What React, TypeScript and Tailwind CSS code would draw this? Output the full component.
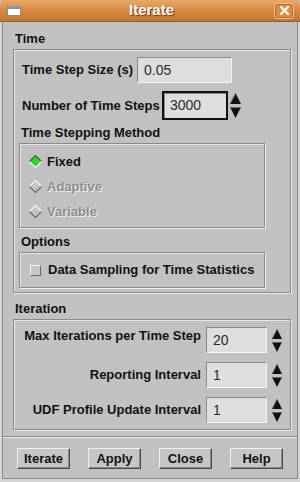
import React from "react";

const Spinner = ({ big }: { big?: boolean }) => (
  <div className={big ? "flex flex-col gap-[3px] w-[11px]" : "flex flex-col gap-[3px] w-[10px]"}>
    <svg width={big ? 11 : 10} height={big ? 11 : 10} viewBox="0 0 10 10">
      <polygon points="5,0 10,10 0,10" fill="#111" />
      <line x1="5" y1="0.5" x2="0.5" y2="9.5" stroke="#666" strokeWidth="0.8" />
    </svg>
    <svg width={big ? 11 : 10} height={big ? 11 : 10} viewBox="0 0 10 10">
      <polygon points="0,0 10,0 5,10" fill="#111" />
      <line x1="0.5" y1="0.5" x2="9.5" y2="0.5" stroke="#777" strokeWidth="0.8" />
    </svg>
  </div>
);

const Field = ({ value, w }: { value: string; w: string }) => (
  <div
    className={`${w} h-[26px] bg-[#dedede] border border-t-[#8a8a8a] border-l-[#8a8a8a] border-b-[#f4f4f4] border-r-[#f4f4f4] flex items-center pl-[6px] text-[14px] text-[#2a2a2a] font-normal`}
  >
    {value}
  </div>
);

const Diamond = ({ on }: { on?: boolean }) => (
  <svg width="13" height="13" viewBox="0 0 13 13">
    <polygon points="6.5,0.5 12.5,6.5 6.5,12.5 0.5,6.5" fill={on ? "#22dd22" : "#c4c4c4"} />
    {on ? (
      <>
        <polyline points="0.5,6.5 6.5,0.5 12.5,6.5" fill="none" stroke="#555" strokeWidth="1.2" />
        <polyline points="0.5,6.5 6.5,12.5 12.5,6.5" fill="none" stroke="#f2f2f2" strokeWidth="1.2" />
      </>
    ) : (
      <>
        <polyline points="0.5,6.5 6.5,0.5 12.5,6.5" fill="none" stroke="#f4f4f4" strokeWidth="1.2" />
        <polyline points="0.5,6.5 6.5,12.5 12.5,6.5" fill="none" stroke="#6a6a6a" strokeWidth="1.2" />
      </>
    )}
  </svg>
);

const Btn = ({ label }: { label: string }) => (
  <div className="w-[53px] h-[21px] border border-t-[#f0f0f0] border-l-[#f0f0f0] border-b-[#4a4a4a] border-r-[#4a4a4a] shadow-[inset_-1px_-1px_0_#8a8a8a] bg-[#c6c6c6] flex items-center justify-center text-[13px] font-bold text-[#111]">
    {label}
  </div>
);

const frame = "border border-[#8a8a8a] shadow-[1px_1px_0_#ececec,inset_1px_1px_0_#e6e6e6]";

export default function App() {
  return (
    <div className="w-[300px] h-[482px] bg-[#c1c1c1] flex flex-col overflow-hidden font-['Liberation_Sans',Arial,sans-serif] text-[#111]">
      {/* title bar */}
      <div className="h-[22px] rounded-t-[5px] bg-gradient-to-b from-[#e8a964] via-[#d68a42] to-[#c47530] border-b border-[#9b5a22] flex items-center">
        <div className="ml-[7px] w-[14px] h-[10px] bg-white border border-[#8b8b8b] border-t-[3px] border-t-[#8e96a4]" />
        <div className="flex-1 text-center text-white font-bold text-[15px] pl-[8px] [text-shadow:1px_1px_1px_#6b3a10]">
          Iterate
        </div>
        <div className="mr-[6px] w-[20px] h-[16px] rounded-[3px] border border-[#f4c48e] shadow-[inset_0_0_0_1px_#b86c2a] bg-[#d98d47] flex items-center justify-center">
          <svg width="9" height="9" viewBox="0 0 9 9">
            <path d="M1 1 L8 8 M8 1 L1 8" stroke="white" strokeWidth="2.2" strokeLinecap="square" />
          </svg>
        </div>
      </div>
      {/* body */}
      <div className="flex-1 px-[2px] pb-[3px] bg-[#d4d4d4]">
        <div className="h-full bg-[#c1c1c1] border-x border-b border-[#8a8a8a] flex flex-col pl-[10px] pr-[6px]">
          <div className="mt-[10px] h-[14px] leading-[14px] text-[13px] font-bold pl-[2px]">Time</div>
          <div className={`mt-[3px] h-[244px] ${frame} flex flex-col pl-[8px]`}>
            <div className="mt-[7px] flex items-center text-[13px] font-bold">
              <div className="w-[115px]">Time Step Size (s)</div>
              <Field value="0.05" w="w-[95px]" />
            </div>
            <div className="mt-[8px] flex items-center text-[13px] font-bold">
              <div className="w-[140px]">Number of Time Steps</div>
              <div className="w-[66px] h-[29px] border-2 border-[#111] bg-[#dedede] flex items-center pl-[6px] text-[14px] font-normal text-[#2a2a2a] shadow-[inset_1px_1px_0_#8a8a8a]">
                3000
              </div>
              <div className="ml-[2px]">
                <Spinner big />
              </div>
            </div>
            <div className="mt-[6px] h-[14px] leading-[14px] text-[13px] font-bold -ml-[1px]">Time Stepping Method</div>
            <div className={`mt-[3px] -ml-[3px] w-[246px] h-[85px] ${frame} flex flex-col pt-[5px]`}>
              {[
                { l: "Fixed", on: true },
                { l: "Adaptive" },
                { l: "Variable" },
              ].map((r) => (
                <div key={r.l} className="h-[25px] flex items-center pl-[9px] gap-[5px] text-[13px] font-bold">
                  <Diamond on={r.on} />
                  <span className={r.on ? "text-[#111]" : "text-[#8c8c8c] [text-shadow:1px_1px_0_#f2f2f2]"}>{r.l}</span>
                </div>
              ))}
            </div>
            <div className="mt-[7px] h-[14px] leading-[14px] text-[13px] font-bold -ml-[1px]">Options</div>
            <div className={`mt-[3px] -ml-[3px] w-[246px] h-[36px] ${frame} flex items-center pl-[10px] gap-[7px]`}>
              <div className="w-[11px] h-[11px] bg-[#c6c6c6] border border-t-[#f4f4f4] border-l-[#f4f4f4] border-b-[#6a6a6a] border-r-[#6a6a6a]" />
              <span className="text-[13px] font-bold">Data Sampling for Time Statistics</span>
            </div>
          </div>
          <div className="mt-[9px] h-[14px] leading-[14px] text-[13px] font-bold pl-[2px]">Iteration</div>
          <div className={`mt-[3px] h-[111px] ${frame} flex flex-col pt-[7px] gap-[9px]`}>
            {[
              { l: "Max Iterations per Time Step", v: "20", top: true },
              { l: "Reporting Interval", v: "1" },
              { l: "UDF Profile Update Interval", v: "1" },
            ].map((r) => (
              <div key={r.l} className="flex items-center h-[26px] text-[13px] font-bold">
                <div className={`w-[187px] text-right ${r.top ? "self-start -mt-[1px]" : ""}`}>{r.l}</div>
                <div className="ml-[5px]">
                  <Field value={r.v} w="w-[61px]" />
                </div>
                <div className="ml-[5px]">
                  <Spinner />
                </div>
              </div>
            ))}
          </div>
          <div className="mt-[6px] -ml-[10px] -mr-[6px] h-[2px] border-t border-[#8a8a8a] border-b border-b-[#ececec]" />
          <div className="mt-[10px] flex gap-[18px] pl-[4px]">
            <Btn label="Iterate" />
            <Btn label="Apply" />
            <Btn label="Close" />
            <Btn label="Help" />
          </div>
        </div>
      </div>
    </div>
  );
}
